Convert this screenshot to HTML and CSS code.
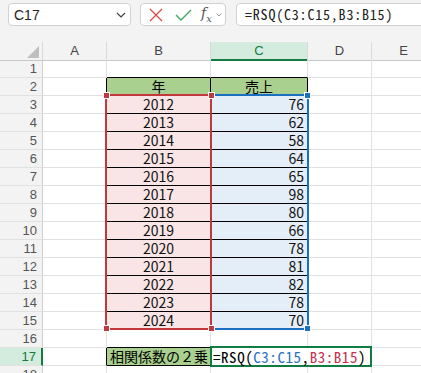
FILE: index.html
```html
<!DOCTYPE html>
<html lang="ja">
<head>
    <meta charset="UTF-8">
    <title>RSQ</title>
    <link rel="stylesheet" href="styles.css">
</head>
<body>
<div class="bar">
    <div class="namebox">
        <span>C17</span>
        <svg width="10" height="6" viewBox="0 0 10 6"><polyline points="1,1 5,5 9,1" fill="none" stroke="#444" stroke-width="1.2"/></svg>
    </div>
    <div class="tools">
        <svg class="cancel" width="14" height="14" viewBox="0 0 14 14"><path d="M1 1 L13 13 M13 1 L1 13" stroke="#e0474c" stroke-width="1.3" fill="none"/></svg>
        <svg class="enter" width="17" height="12" viewBox="0 0 17 12"><polyline points="1,6 6,11 16,1" fill="none" stroke="#3ba55c" stroke-width="1.3"/></svg>
        <span class="fx">f<sub>x</sub></span>
        <svg class="more" width="6" height="4" viewBox="0 0 6 4"><polyline points="0.5,0.5 3,3 5.5,0.5" fill="none" stroke="#999" stroke-width="1"/></svg>
    </div>
    <div class="fbox">=RSQ(C3:C15,B3:B15)</div>
</div>

<div class="sheet">
    <div class="row head">
        <div class="corner"><span class="tri"></span></div>
        <div>A</div><div>B</div><div class="sel">C</div><div>D</div><div>E</div>
    </div>
    <div class="row"><div class="rh">1</div><div></div><div class="bk-b"></div><div class="bk-b"></div><div></div><div></div></div>
    <div class="row"><div class="rh">2</div><div class="bk-r"></div><div class="hd bk-r bk-b">年</div><div class="hd bk-r bk-b">売上</div><div></div><div></div></div>
    <div class="row"><div class="rh">3</div><div class="bk-r"></div><div class="yr bk-r bk-b">2012</div><div class="val bk-r bk-b">76</div><div></div><div></div></div>
    <div class="row"><div class="rh">4</div><div class="bk-r"></div><div class="yr bk-r bk-b">2013</div><div class="val bk-r bk-b">62</div><div></div><div></div></div>
    <div class="row"><div class="rh">5</div><div class="bk-r"></div><div class="yr bk-r bk-b">2014</div><div class="val bk-r bk-b">58</div><div></div><div></div></div>
    <div class="row"><div class="rh">6</div><div class="bk-r"></div><div class="yr bk-r bk-b">2015</div><div class="val bk-r bk-b">64</div><div></div><div></div></div>
    <div class="row"><div class="rh">7</div><div class="bk-r"></div><div class="yr bk-r bk-b">2016</div><div class="val bk-r bk-b">65</div><div></div><div></div></div>
    <div class="row"><div class="rh">8</div><div class="bk-r"></div><div class="yr bk-r bk-b">2017</div><div class="val bk-r bk-b">98</div><div></div><div></div></div>
    <div class="row"><div class="rh">9</div><div class="bk-r"></div><div class="yr bk-r bk-b">2018</div><div class="val bk-r bk-b">80</div><div></div><div></div></div>
    <div class="row"><div class="rh">10</div><div class="bk-r"></div><div class="yr bk-r bk-b">2019</div><div class="val bk-r bk-b">66</div><div></div><div></div></div>
    <div class="row"><div class="rh">11</div><div class="bk-r"></div><div class="yr bk-r bk-b">2020</div><div class="val bk-r bk-b">78</div><div></div><div></div></div>
    <div class="row"><div class="rh">12</div><div class="bk-r"></div><div class="yr bk-r bk-b">2021</div><div class="val bk-r bk-b">81</div><div></div><div></div></div>
    <div class="row"><div class="rh">13</div><div class="bk-r"></div><div class="yr bk-r bk-b">2022</div><div class="val bk-r bk-b">82</div><div></div><div></div></div>
    <div class="row"><div class="rh">14</div><div class="bk-r"></div><div class="yr bk-r bk-b">2023</div><div class="val bk-r bk-b">78</div><div></div><div></div></div>
    <div class="row"><div class="rh">15</div><div class="bk-r"></div><div class="yr bk-r bk-b">2024</div><div class="val bk-r bk-b">70</div><div></div><div></div></div>
    <div class="row"><div class="rh">16</div><div></div><div class="bk-b"></div><div></div><div></div><div></div></div>
    <div class="row"><div class="rh sel">17</div><div class="bk-r"></div><div class="hd lbl bk-r bk-b">相関係数の２乗</div><div></div><div></div><div></div></div>
    <div class="row"><div class="rh">18</div><div></div><div></div><div></div><div></div><div></div></div>

    <!-- range highlights while editing -->
    <div class="range blue"></div>
    <div class="range red"></div>
    <span class="sq red-sq" style="left:103px;top:50px"></span>
    <span class="sq red-sq" style="left:208px;top:50px"></span>
    <span class="sq red-sq" style="left:103px;top:283px"></span>
    <span class="sq red-sq" style="left:208px;top:283px"></span>
    <span class="sq blue-sq" style="left:304px;top:50px"></span>
    <span class="sq blue-sq" style="left:304px;top:283px"></span>

    <div class="edit">=RSQ(<span class="ref-c">C3:C15</span>,<span class="ref-b">B3:B15</span>)</div>
</div>
</body>
</html>
```

FILE: styles.css
```css
*{
    margin: 0;
    padding: 0;
    box-sizing: border-box;
}
body{
    width: 421px;
    height: 373px;
    overflow: hidden;
    background-color: #f3f3f3;
    font-family: "Liberation Sans", sans-serif;
}

/*formula bar*/
.bar{
    display: flex;
    height: 42px;
    padding: 3px 0 0 8px;
}
.namebox{
    width: 123px;
    height: 23px;
    background-color: #fff;
    border: 1px solid #d1d1d1;
    border-radius: 4px;
    display: flex;
    align-items: center;
    justify-content: space-between;
    padding: 0 4px 0 5px;
    font-size: 14px;
    color: #222;
}
.tools{
    width: 86px;
    height: 23px;
    margin-left: 9px;
    background-color: #fff;
    border: 1px solid #d1d1d1;
    border-radius: 4px;
    display: flex;
    align-items: center;
    padding-left: 8px;
}
.enter{
    margin-left: 12px;
}
.fx{
    margin-left: 9px;
    font-family: "DejaVu Serif", serif;
    font-style: italic;
    font-size: 14px;
    color: #555;
}
.fx sub{
    font-size: 10px;
}
.more{
    margin-left: 4px;
}
.fbox{
    flex: 1;
    height: 23px;
    margin-left: 10px;
    margin-right: -8px;
    background-color: #fff;
    border: 1px solid #d1d1d1;
    border-radius: 4px;
    padding-left: 8px;
    font-family: "Noto Sans Mono CJK JP", "DejaVu Sans Mono", monospace;
    font-size: 14px;
    letter-spacing: 0.8px;
    line-height: 21px;
    color: #222;
}

/*sheet*/
.sheet{
    position: relative;
    background-color: #fff;
}
.row{
    display: grid;
    grid-template-columns: 43px 64px 104px 97px 64px 64px;
    height: 18px;
}
.row > div{
    border-right: 1px solid #e1e1e1;
    border-bottom: 1px solid #e1e1e1;
    line-height: 17px;
    white-space: nowrap;
}
.head > div{
    background-color: #f3f3f3;
    border-right-color: #dadada;
    border-bottom-color: #c8c8c8;
    text-align: center;
    font-size: 13px;
    color: #444;
}
.head > .sel{
    background-color: #d3ecdd;
    border-bottom: 2px solid #107c41;
    color: #107c41;
}
.corner{
    position: relative;
}
.tri{
    position: absolute;
    right: 3px;
    bottom: 2px;
    width: 0;
    height: 0;
    border-left: 12px solid transparent;
    border-bottom: 12px solid #bfbfbf;
}
.row > .rh{
    background-color: #f3f3f3;
    border-right-color: #cfcfcf;
    border-bottom-color: #e1e1e1;
    text-align: right;
    padding-right: 5px;
    font-size: 13px;
    color: #555;
}
.row > .rh.sel{
    background-color: #d3ecdd;
    border-right: 2px solid #107c41;
    color: #107c41;
}
.row > .bk-r{
    border-right-color: #000;
}
.row > .bk-b{
    border-bottom-color: #000;
}
.hd{
    background-color: #a9d08e;
    text-align: center;
    font-family: "Noto Sans CJK JP", sans-serif;
    font-size: 14px;
    color: #000;
}
.lbl{
    text-align: left;
    padding-left: 3px;
}
.yr{
    background-color: #f9e5e5;
    text-align: center;
    font-family: "Noto Sans CJK JP", sans-serif;
    font-size: 14px;
    color: #111;
}
.val{
    background-color: #e4eef8;
    text-align: right;
    padding-right: 3px;
    font-family: "Noto Sans CJK JP", sans-serif;
    font-size: 14px;
    color: #111;
}

/*range highlight*/
.range{
    position: absolute;
    top: 52px;
    height: 236px;
    border: 2px solid;
}
.red{
    left: 105px;
    width: 107px;
    border-color: #c3383d;
}
.blue{
    left: 210px;
    width: 99px;
    border-color: #1b6fc2;
}
.sq{
    position: absolute;
    width: 7px;
    height: 7px;
    border: 1px solid #fff;
}
.red-sq{
    background-color: #c3383d;
}
.blue-sq{
    background-color: #1b6fc2;
}
.edit{
    position: absolute;
    left: 210px;
    top: 304px;
    width: 162px;
    height: 21px;
    border: 2px solid #107c41;
    background-color: #fff;
    padding-left: 1px;
    font-family: "Noto Sans Mono CJK JP", "DejaVu Sans Mono", monospace;
    font-size: 15px;
    letter-spacing: 0.55px;
    line-height: 17px;
    color: #000;
}
.ref-c{
    color: #2a72c6;
}
.ref-b{
    color: #c3314b;
}
```
